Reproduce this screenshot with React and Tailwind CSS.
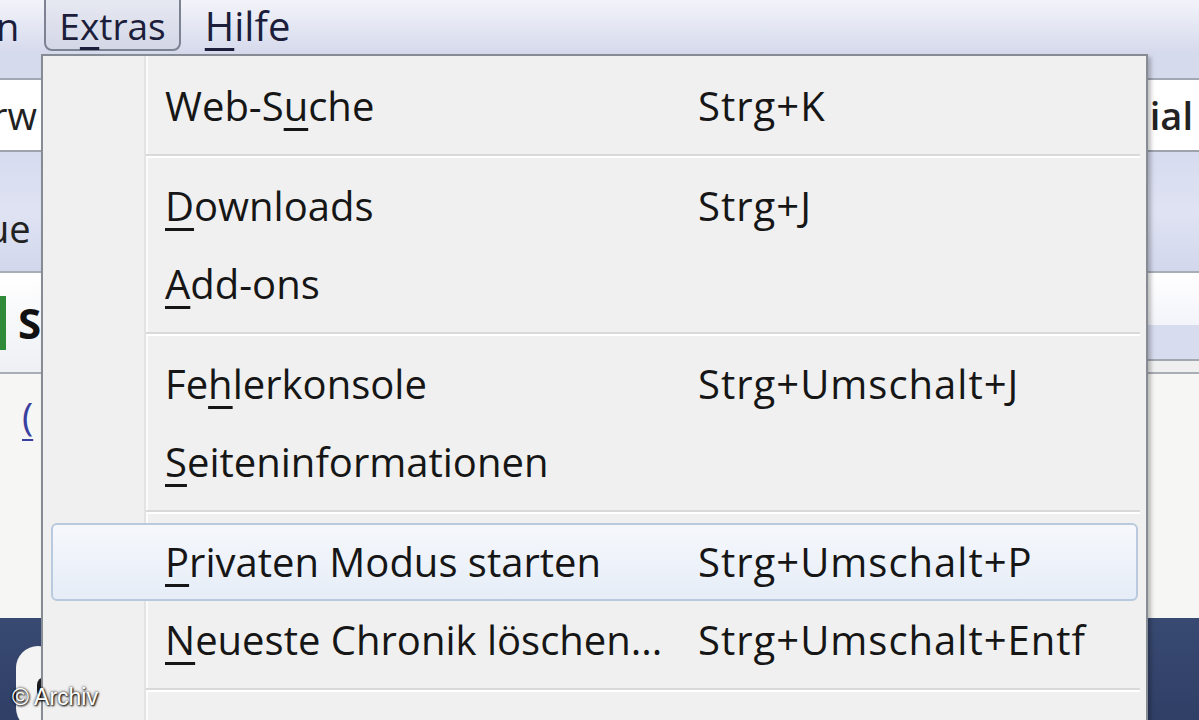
import React from 'react';

const font = { fontFamily: '"Open Sans", "Noto Sans", sans-serif' };

// access key: underlined letter like in the Windows menus
const K = ({ children }) => (
  <span className="underline decoration-[3px] underline-offset-[7px]">{children}</span>
);

const items = [
  { label: <>Web-S<K>u</K>che</>, key: 'Strg+K' },
  'sep',
  { label: <><K>D</K>ownloads</>, key: 'Strg+J' },
  { label: <><K>A</K>dd-ons</>, key: '' },
  'sep',
  { label: <>Fe<K>h</K>lerkonsole</>, key: 'Strg+Umschalt+J' },
  { label: <><K>S</K>eiteninformationen</>, key: '' },
  'sep',
  { label: <><K>P</K>rivaten Modus starten</>, key: 'Strg+Umschalt+P', active: true },
  { label: <><K>N</K>eueste Chronik löschen...</>, key: 'Strg+Umschalt+Entf' },
  'sep',
  { label: <><K>E</K>instellungen...</>, key: '' },
];

const MenuItem = ({ item }) => (
  <div
    className={
      'relative flex items-center h-[78px] mx-[8px] rounded-[6px] border-2 ' +
      (item.active
        ? 'border-[#b9c9de] bg-gradient-to-b from-[#f6f8fc] to-[#e6edf7]'
        : 'border-transparent')
    }
  >
    <div className="w-[112px] shrink-0" />
    <div className="w-[533px] shrink-0 whitespace-nowrap">{item.label}</div>
    <div className="whitespace-nowrap tracking-[1px]">{item.key}</div>
  </div>
);

const Separator = () => (
  <div className="h-[22px] flex flex-col justify-center pl-[103px] pr-[6px]">
    <div className="h-[2px] bg-[#d9d9d9]" />
    <div className="h-[2px] bg-white" />
  </div>
);

export default function App() {
  return (
    <div className="relative w-[1199px] h-[720px] overflow-hidden bg-[#f3f3f3] text-[#1c1c1c]" style={font}>
      {/* browser chrome in the background */}
      <div className="flex flex-col h-full text-[38px]">
        <div className="h-[52px] shrink-0 bg-gradient-to-b from-[#f3f4fa] via-[#e4e7f3] to-[#d6daec] flex items-center text-[#1b1d3a]">
          <span className="ml-[-4px] leading-none">n</span>
          <div className="ml-[25px] h-[58px] -mt-[8px] px-[13px] pt-[6px] flex items-center rounded-b-[8px] border-2 border-[#7d8292] bg-gradient-to-b from-[#e9ebf3] to-[#d3d7e6] leading-none text-[37px]">
            E<K>x</K>tras
          </div>
          <span className="ml-[24px] leading-none text-[40px]"><K>H</K>ilfe</span>
        </div>
        <div className="h-[28px] shrink-0 bg-[#d5daed] border-b-2 border-[#a4a8b4]" />
        <div className="h-[72px] shrink-0 bg-white border-b-2 border-[#9ea3ae] flex items-center justify-between text-[#222]">
          <span className="ml-[-8px]">rw</span>
          <span className="mr-[6px] font-semibold">ial</span>
        </div>
        <div className="h-[121px] shrink-0 bg-gradient-to-b from-[#d6dbef] via-[#dfe3f3] to-[#d2d7ec] border-b-2 border-[#a9adb8] flex items-end pb-[24px]">
          <span className="ml-[-14px] leading-none text-[#222]">ue</span>
        </div>
        <div className="h-[101px] shrink-0 flex border-b-2 border-[#a9adb6]">
          <div className="flex-1 bg-gradient-to-b from-white to-[#eef0f4] flex items-center">
            <div className="w-[6px] h-[54px] bg-[#2f8a3a]" />
            <span className="ml-[12px] font-bold text-[42px] text-[#111]">S</span>
          </div>
          <div className="w-[52px] flex flex-col">
            <div className="h-[52px] bg-gradient-to-b from-white to-[#f3f4fa]" />
            <div className="h-[36px] bg-[#d7dcef] border-b-2 border-[#a3a7b2]" />
            <div className="flex-1 bg-[#efefef]" />
          </div>
        </div>
        <div className="h-[244px] shrink-0 bg-[#f6f6f4] flex items-start">
          <span className="ml-[22px] mt-[14px] text-[#3a3fa0] underline decoration-2 underline-offset-[8px]">(</span>
        </div>
        <div className="flex-1 bg-gradient-to-b from-[#394a72] to-[#2f3f66] relative">
          <div className="absolute left-[16px] top-[28px] w-[44px] h-[84px] rounded-full bg-[#f4f4f4] flex items-center justify-center">
            <div className="w-[16px] h-[22px] rounded-full bg-[#1e1e22] ml-[14px]" />
          </div>
        </div>
      </div>

      {/* drop-down menu */}
      <div className="absolute left-[41px] top-[54px] w-[1107px] h-[700px] bg-[#f0f0f0] border-2 border-[#878b94] shadow-[3px_3px_4px_rgba(0,0,0,0.25)] pt-[11px] text-[40px] text-[#161616]">
        <div className="absolute left-[101px] top-0 bottom-0 w-[2px] bg-[#e3e3e3]" />
        <div className="absolute left-[103px] top-0 bottom-0 w-[2px] bg-[#fbfbfb]" />
        <div className="relative">
          {items.map((item, i) =>
            item === 'sep' ? <Separator key={i} /> : <MenuItem key={i} item={item} />
          )}
        </div>
      </div>

      <div
        className="absolute left-[12px] top-[686px] text-[23px] text-white leading-none"
        style={{ fontFamily: '"Liberation Sans", Arial, sans-serif', textShadow: '0 0 3px #000, 1px 1px 2px #000' }}
      >
        © Archiv
      </div>
    </div>
  );
}
